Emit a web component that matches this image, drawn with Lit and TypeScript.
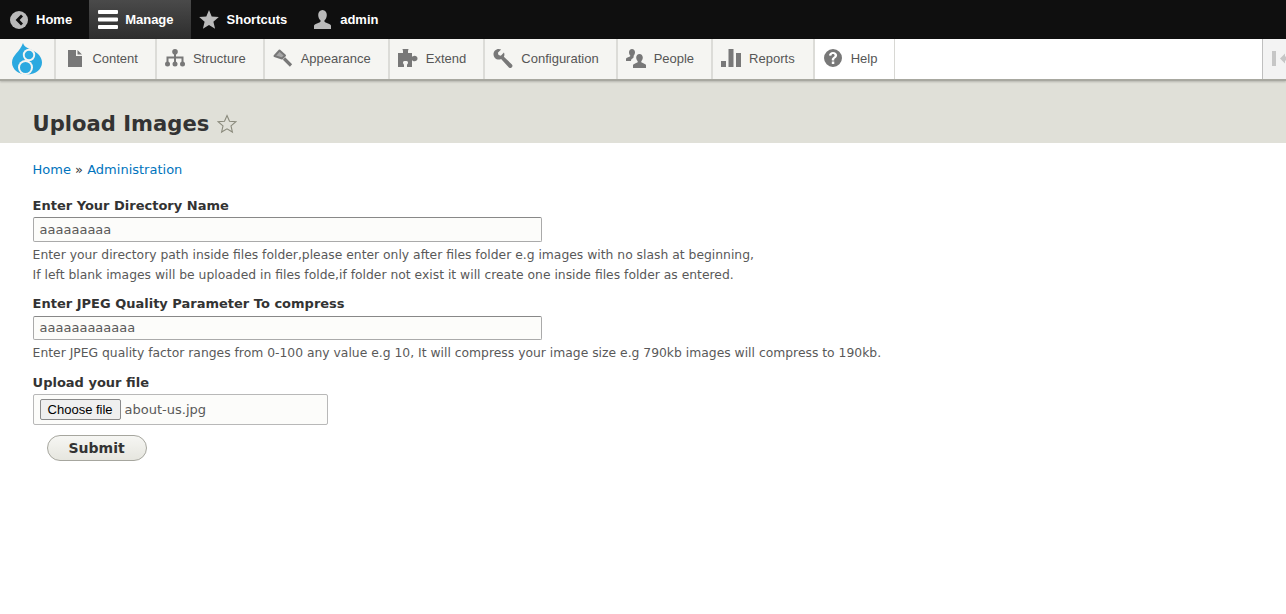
import { LitElement, html, css, svg } from "lit";
import { customElement } from "lit/decorators.js";

const icons: Record<string, unknown> = {
  home: svg`<svg class="ic" width="18" height="18" viewBox="0 0 18 18"><circle cx="9" cy="9" r="9" fill="#bababa"/><path d="M11 3.600 5.600 9l5.400 5.400 2-2L9.600 9 13 5.600z" fill="#0f0f0f"/></svg>`,
  manage: svg`<svg class="ic" width="20" height="19" viewBox="0 0 20 19"><path d="M1 0h18a1 1 0 0 1 1 1v2a1 1 0 0 1-1 1H1a1 1 0 0 1-1-1V1a1 1 0 0 1 1-1zM1 7.500h18a1 1 0 0 1 1 1v2a1 1 0 0 1-1 1H1a1 1 0 0 1-1-1v-2a1 1 0 0 1 1-1zM1 15h18a1 1 0 0 1 1 1v2a1 1 0 0 1-1 1H1a1 1 0 0 1-1-1v-2a1 1 0 0 1 1-1z" fill="#fff"/></svg>`,
  star: svg`<svg class="ic" width="20" height="19" viewBox="0 0 20 19"><path d="M10 0l2.700 6.600 7.100.5-5.400 4.600 1.700 7L10 15l-6.100 3.700 1.700-7L.2 7.100l7.100-.5z" fill="#bababa"/></svg>`,
  user: svg`<svg class="ic" width="19" height="19" viewBox="0 0 19 19"><path d="M9.500 0c2.700 0 4.300 2.200 4.300 4.900 0 2-.9 4-2 5.200-.6.700-.5 1.700.3 2.100 2.200 1 5.400 1.900 5.900 3.300V19H1v-3.500c.5-1.400 3.700-2.300 5.900-3.300.8-.4.900-1.400.3-2.100-1.100-1.200-2-3.200-2-5.200C5.200 2.200 6.800 0 9.500 0z" fill="#bababa"/></svg>`,
  content: svg`<svg class="ic" width="16" height="17" viewBox="-2 0 16 17"><path d="M0 0h8v6h6v11H0zM9.500 0 14 4.500H9.500z" fill="#787878"/></svg>`,
  structure: svg`<svg class="ic" width="20" height="18" viewBox="0 0 20 18"><g fill="#787878"><circle cx="10" cy="2.800" r="2.800"/><circle cx="2.500" cy="15" r="2.500"/><circle cx="10" cy="15" r="2.500"/><circle cx="17.500" cy="15" r="2.500"/><path d="M9 4h2v3.500h7.500V13h-2V9.500H11V13H9V9.500H3.500V13h-2V7.500H9z"/></g></svg>`,
  appearance: svg`<svg class="ic" width="20" height="18" viewBox="0 0 20 18"><path d="M1.500 7 6.500 1.500 12 6.500 9 9.500z" fill="#a6a6a6" stroke="#787878" stroke-width="2" stroke-linejoin="round"/><path d="M11 9.500 18 16.500" stroke="#787878" stroke-width="3.200" fill="none"/></svg>`,
  extend: svg`<svg class="ic" width="20" height="18" viewBox="0 0 20 18"><path d="M0 4h5V2.200C5 1 4.500 1 4.500 0h6c0 1-.5 1-.5 2.200V4h4v3.500c1 0 1.200-.8 2.500-.8 1.600 0 3 1 3 2.800s-1.400 2.800-3 2.800c-1.300 0-1.500-.8-2.500-.8V18H9v-2c0-1 1-1.200 1-2.300C10 12.300 9 12 7.500 12S5 12.300 5 13.700c0 1.100 1 1.300 1 2.300v2H0z" fill="#787878"/></svg>`,
  config: svg`<svg class="ic" width="20" height="19" viewBox="0 0 20 20"><path d="M5.500 0C6.400 0 7.200.2 8 .6L4.600 4l.7 2.300 2.400.7L11 3.700c.3.600.5 1.300.5 2 0 .9-.2 1.700-.6 2.400l8.500 8.200c.8.800.8 2 0 2.800l-.4.400c-.8.800-2 .8-2.800 0L8 10.500c-.8.400-1.600.6-2.500.6C2.400 11.100 0 8.600 0 5.500S2.400 0 5.500 0z" fill="#787878"/></svg>`,
  people: svg`<svg class="ic" width="20" height="19" viewBox="0 0 20 19"><g fill="#787878"><path d="M6 0c1.800 0 3 1.400 3 3.300 0 1.300-.6 2.500-1.200 3.300-.4.500-.3 1.100.1 1.400L6.500 9.500c-1.200.6-1.500 1.300-1.500 2.500H0V9.700c.3-1 2.600-1.500 3.900-2.100.5-.3.600-.8.300-1C3.500 5.800 3 4.600 3 3.300 3 1.400 4.200 0 6 0z"/><path d="M13.500 5c2 0 3.300 1.600 3.300 3.600 0 1.400-.6 2.700-1.300 3.500-.4.500-.4 1.200.2 1.500 1.500.8 3.900 1.400 4.300 2.400V19H7v-3c.4-1 2.800-1.600 4.300-2.400.6-.3.600-1 .2-1.500-.7-.8-1.300-2.100-1.300-3.500 0-2 1.300-3.600 3.300-3.600z"/></g></svg>`,
  reports: svg`<svg class="ic" width="20" height="18" viewBox="0 0 20 18"><path d="M0 12h5v6H0zM7.500 0h5v18h-5zM15 4h5v14h-5z" fill="#787878"/></svg>`,
  help: svg`<svg class="ic" width="18" height="18" viewBox="0 0 18 18"><path fill-rule="evenodd" d="M9 0a9 9 0 1 1 0 18A9 9 0 0 1 9 0zM7.800 12.500v2.500h2.500v-2.500zM9 3C6.800 3 5.200 4.200 5 6.500l2.300.3C7.500 5.700 8 5.100 9 5.100s1.600.6 1.600 1.300c0 1.500-2.800 1.800-2.800 4.100v.9h2.400v-.6c0-1.600 2.900-1.900 2.900-4.500C13.100 4.300 11.300 3 9 3z" fill="#787878"/></svg>`,
};

const logo = svg`<svg width="30" height="32" viewBox="0 0 30 32"><path fill="#2ba9e0" d="M11 0C12 4 16 5 20 7C26 10 30 14 30 19.500C30 26 24 31.500 15 31.500C6 31.500 0 26 0 19.500C0 12 8 9 11 0z"/><circle cx="17" cy="12" r="6.200" fill="#f5f5f2"/><circle cx="13.500" cy="24.500" r="7.500" fill="#f5f5f2"/><circle cx="17" cy="12" r="4.300" fill="#2ba9e0"/><circle cx="13.500" cy="24.500" r="5.500" fill="#2ba9e0"/></svg>`;

@customElement("app-root")
export class AppRoot extends LitElement {
  static styles = css`
    :host { display: block; min-height: 614px; background: #fff; font-family: "DejaVu Sans", sans-serif; color: #333; font-size: 13px; }
    .bar { display: flex; height: 39px; background: #0f0f0f; }
    .bar a { display: flex; align-items: center; height: 39px; color: #fff; font: bold 13px "Liberation Sans", sans-serif; }
    .home { gap: 8px; padding: 0 17px 0 10px; }
    .manage { gap: 7px; padding: 0 17px 0 9px; background: linear-gradient(#4a4a4a, #2d2d2d); }
    .short { gap: 8px; padding: 0 17px 0 8px; }
    .admin { gap: 8px; padding: 0 0 0 9px; }
    .tray { display: flex; height: 40px; background: #fff; border-bottom: 2px solid #a8a8a0; box-shadow: 0 1px 2px rgba(0,0,0,.2); position: relative; }
    .logo { width: 54.400px; display: flex; align-items: center; justify-content: center; background: #f5f5f2; border-right: 2px solid #dcdcd8; flex: none; }
    .tray a { display: flex; align-items: center; height: 38px; padding-bottom: 2px; background: #f5f5f2; border-right: 2px solid #dcdcd8; font: 13px "Liberation Sans", sans-serif; color: #565656; padding-right: 17px; }
    .tray a.wide { padding-right: 18px; }
    .tray a.active { background: #fff; border-right: 1px solid #d8d8d4; }
    .tray .slot { width: 36px; display: flex; justify-content: center; flex: none; }
    .spacer { flex: 1; }
    .toggle { border-left: 1px solid #bfbfbf; background: #f3f3f3; display: flex; align-items: center; padding: 0 0 1px 9px; box-sizing: border-box; width: 24px; overflow: hidden; }
    .head { background: #e0e0d8; height: 62px; box-sizing: border-box; padding: 29px 32.600px 0; display: flex; align-items: flex-start; gap: 8px; }
    h1 { margin: 0; font: bold 21.100px/28px "DejaVu Sans", sans-serif; color: #333; }
    .head svg { margin-top: 4px; }
    .main { padding: 18px 32.600px 0; }
    .crumb { font-size: 13px; line-height: 17px; color: #333; }
    .crumb span { color: #0074bd; }
    form { margin-top: 20px; display: block; }
    label { display: block; font-weight: bold; font-size: 13px; line-height: 16px; color: #333; margin-bottom: 3px; }
    .input { display: block; box-sizing: border-box; width: 509px; height: 25px; border: 1px solid #aaa; border-top-color: #888; border-radius: 2px; background: #fcfcfa; font: 13px/23px "DejaVu Sans", sans-serif; color: #595959; padding: 0 6px; }
    .desc { font-size: 12.350px; line-height: 20px; color: #595959; padding-top: 3px; }
    .field { margin-bottom: 11px; }
    .field.second { margin-bottom: 12px; }
    .field.second label { margin-bottom: 4px; }
    .field.second .input { height: 24px; line-height: 22px; }
    .file { display: flex; align-items: center; gap: 4px; box-sizing: border-box; width: 295px; height: 31px; border: 1px solid #b8b8b8; border-radius: 2px; background: #fcfcfa; padding: 0 6px; color: #595959; font-size: 13px; }
    .choose { box-sizing: border-box; height: 21px; width: 81px; display: flex; align-items: center; justify-content: center; background: #efefef; border: 1px solid #8a8a8a; border-radius: 2px; font: 13px "Liberation Sans", sans-serif; color: #000; }
    .submit { box-sizing: border-box; margin: 10px 0 0 14px; width: 100px; height: 26px; border: 1px solid #a6a69e; border-radius: 13px; background: linear-gradient(#f6f6f3, #e6e6df); font: bold 14px "DejaVu Sans", sans-serif; color: #333; display: flex; align-items: center; justify-content: center; }
  `;

  private tab(icon: string, label: string, cls = "") {
    return html`<a class=${cls}><span class="slot">${icons[icon]}</span>${label}</a>`;
  }

  render() {
    return html`
      <div class="bar">
        <a class="home">${icons.home}Home</a>
        <a class="manage">${icons.manage}Manage</a>
        <a class="short">${icons.star}Shortcuts</a>
        <a class="admin">${icons.user}admin</a>
      </div>
      <div class="tray">
        <div class="logo">${logo}</div>
        ${this.tab("content", "Content")}
        ${this.tab("structure", "Structure")}
        ${this.tab("appearance", "Appearance")}
        ${this.tab("extend", "Extend")}
        ${this.tab("config", "Configuration")}
        ${this.tab("people", "People")}
        ${this.tab("reports", "Reports", "wide")}
        ${this.tab("help", "Help", "active")}
        <div class="spacer"></div>
        <div class="toggle"><svg width="14" height="15" viewBox="0 0 14 15"><path d="M0 0h4v15H0zM8 7.500l5-5v3h6v4h-6v3z" fill="#c6c6c6"/></svg></div>
      </div>
      <div class="head">
        <h1>Upload Images</h1>
        <svg width="20" height="20" viewBox="0 0 20 20"><path d="M10 1.500l2.500 5.700 6.200.6-4.700 4.100 1.400 6.100L10 14.800 4.600 18l1.400-6.100-4.700-4.100 6.200-.6z" fill="none" stroke="#8a8a7c" stroke-width="1.100"/></svg>
      </div>
      <div class="main">
        <div class="crumb"><span>Home</span> » <span>Administration</span></div>
        <form>
          <div class="field">
            <label>Enter Your Directory Name</label>
            <div class="input">aaaaaaaaa</div>
            <div class="desc">Enter your directory path inside files folder,please enter only after files folder e.g images with no slash at beginning,<br />If left blank images will be uploaded in files folde,if folder not exist it will create one inside files folder as entered.</div>
          </div>
          <div class="field second">
            <label>Enter JPEG Quality Parameter To compress</label>
            <div class="input">aaaaaaaaaaaa</div>
            <div class="desc">Enter JPEG quality factor ranges from 0-100 any value e.g 10, It will compress your image size e.g 790kb images will compress to 190kb.</div>
          </div>
          <label>Upload your file</label>
          <div class="file"><span class="choose">Choose file</span>about-us.jpg</div>
          <div class="submit">Submit</div>
        </form>
      </div>
    `;
  }
}
